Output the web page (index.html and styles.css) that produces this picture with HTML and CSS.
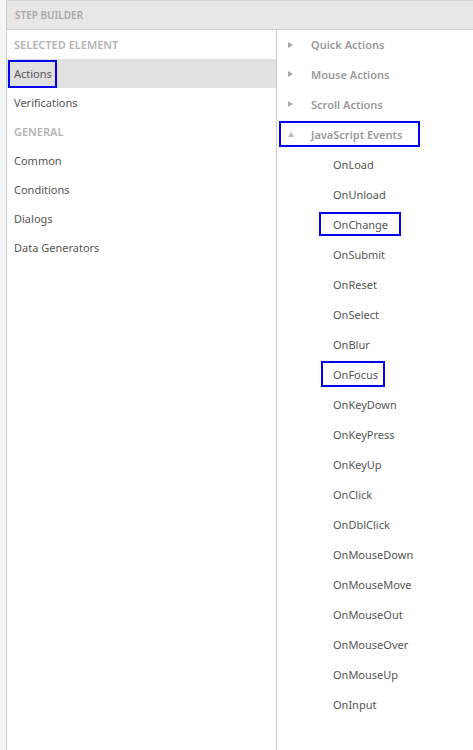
FILE: index.html
```html
<!DOCTYPE html>
<html>
<head>
<meta charset="utf-8">
<link rel="stylesheet" href="styles.css">
</head>
<body>
<div class="frame">
  <div class="header">STEP BUILDER</div>
  <div class="panes">
    <div class="left">
      <div class="row cat">SELECTED ELEMENT</div>
      <div class="row item selected"><span class="mark mark-actions">Actions</span></div>
      <div class="row item">Verifications</div>
      <div class="row cat">GENERAL</div>
      <div class="row item">Common</div>
      <div class="row item">Conditions</div>
      <div class="row item">Dialogs</div>
      <div class="row item">Data Generators</div>
    </div>
    <div class="right">
      <div class="rrow group first"><span class="tri right-tri"></span><span>Quick Actions</span></div>
      <div class="rrow group"><span class="tri right-tri"></span><span>Mouse Actions</span></div>
      <div class="rrow group"><span class="tri right-tri"></span><span>Scroll Actions</span></div>
      <div class="rrow group"><span class="mark mark-js"><span class="tri up-tri"></span><span>JavaScript Events</span></span></div>
      <div class="rrow ev">OnLoad</div>
      <div class="rrow ev">OnUnload</div>
      <div class="rrow ev"><span class="mark mark-change">OnChange</span></div>
      <div class="rrow ev">OnSubmit</div>
      <div class="rrow ev">OnReset</div>
      <div class="rrow ev">OnSelect</div>
      <div class="rrow ev">OnBlur</div>
      <div class="rrow ev"><span class="mark mark-focus">OnFocus</span></div>
      <div class="rrow ev">OnKeyDown</div>
      <div class="rrow ev">OnKeyPress</div>
      <div class="rrow ev">OnKeyUp</div>
      <div class="rrow ev">OnClick</div>
      <div class="rrow ev">OnDblClick</div>
      <div class="rrow ev">OnMouseDown</div>
      <div class="rrow ev">OnMouseMove</div>
      <div class="rrow ev">OnMouseOut</div>
      <div class="rrow ev">OnMouseOver</div>
      <div class="rrow ev">OnMouseUp</div>
      <div class="rrow ev">OnInput</div>
    </div>
  </div>
</div>
</body>
</html>
```

FILE: styles.css
```css
html, body {
  margin: 0;
  padding: 0;
  height: 100%;
  overflow: hidden;
}
body {
  background: #f4f4f4;
  font-family: "Noto Sans", "Open Sans", "DejaVu Sans", sans-serif;
  font-size: 11px;
  color: #555;
}
.frame {
  margin-left: 6px;
  height: 750px;
  border-left: 1px solid #c9c9c9;
  border-top: 1px solid #d6d6d6;
  background: #fff;
  display: flex;
  flex-direction: column;
  box-sizing: border-box;
}
.header {
  height: 28px;
  flex: 0 0 28px;
  background: #e9e6e3;
  border-bottom: 1px solid #cfcfcf;
  display: flex;
  align-items: center;
  padding-left: 8px;
  font-size: 10px;
  font-weight: 600;
  color: #a9a9a9;
}
.panes {
  flex: 1;
  display: flex;
}
.left {
  width: 269px;
  border-right: 1px solid #cfcfcf;
  flex: 0 0 269px;
}
.right {
  flex: 1;
}
.row {
  height: 29px;
  display: flex;
  align-items: center;
  padding-left: 7px;
}
.cat {
  color: #b3b3b3;
  font-weight: 600;
}
.item {
  color: #555;
}
.selected {
  background: #e1e1e1;
}
.mark {
  border: 2px solid #0000ee;
  display: inline-flex;
  align-items: center;
}
.mark-actions {
  margin-left: -6px;
  padding: 3px 3px 3px 4px;
  height: 18px;
}
.rrow {
  height: 30px;
  display: flex;
  align-items: center;
}
.rrow.first {
  height: 29px;
}
.group {
  padding-left: 10px;
  color: #9a9a9a;
  font-weight: 600;
}
.tri {
  display: inline-block;
  width: 0;
  height: 0;
}
.right-tri {
  border-top: 3.5px solid transparent;
  border-bottom: 3.5px solid transparent;
  border-left: 5px solid #a8a8a8;
  margin-left: 1px;
  margin-right: 18px;
}
.up-tri {
  border-left: 3.5px solid transparent;
  border-right: 3.5px solid transparent;
  border-bottom: 5px solid #b8b8b8;
  margin-right: 17px;
  margin-left: 7px;
}
.mark-js {
  margin-left: -8px;
  height: 22px;
  width: 137px;
  padding: 0;
}
.ev {
  padding-left: 56px;
  color: #555;
}
.mark-change {
  margin-left: -14px;
  padding: 0 11px 0 12px;
  height: 20px;
}
.mark-focus {
  margin-left: -12px;
  padding: 0 5px 0 10px;
  height: 22px;
}
```
